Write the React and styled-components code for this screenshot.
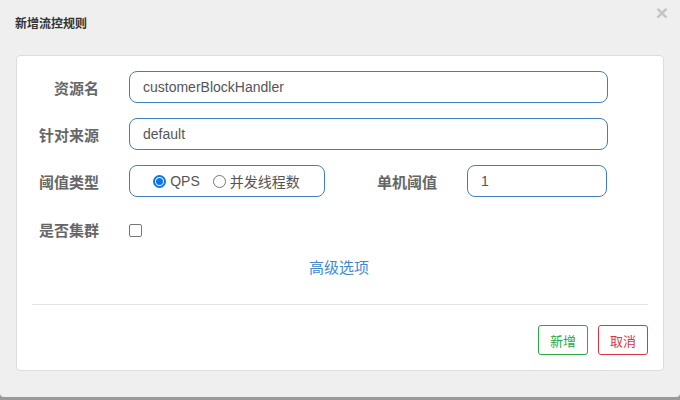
import React from "react";
import styled, { createGlobalStyle } from "styled-components";

const Global = createGlobalStyle`
  html, body { margin: 0; padding: 0; background: #9a9a9a; }
  body { font-family: "Liberation Sans", "Noto Sans CJK SC", Arial, sans-serif; }
  * { box-sizing: border-box; }
`;

const Modal = styled.div`
  position: relative;
  width: 680px;
  height: 397px;
  background: #efefef;
  border-radius: 0 0 4px 4px;
  padding: 0 16px;
  display: flex;
  flex-direction: column;
`;

const Header = styled.div`
  height: 55px;
  display: flex;
  align-items: flex-start;
  padding-top: 15px;
`;

const Title = styled.h4`
  margin: 0;
  margin-left: -1px;
  font-size: 12px;
  line-height: 16px;
  font-weight: bold;
  color: #333;
  font-family: "Noto Sans CJK SC", sans-serif;
`;

const Close = styled.span`
  position: absolute;
  top: 2px;
  right: 12px;
  font-size: 21px;
  line-height: 22px;
  font-weight: bold;
  color: #c4c4c4;
  font-family: "Liberation Sans", Arial, sans-serif;
`;

const Panel = styled.div`
  background: #fff;
  border: 1px solid #dcdcdc;
  border-radius: 4px;
  padding: 15px 15px 15px;
  height: 316px;
  display: flex;
  flex-direction: column;
`;

const Row = styled.div`
  display: flex;
  align-items: center;
  height: ${(p) => p.$h || 32}px;
  margin-bottom: 15px;
`;

const Label = styled.label`
  width: ${(p) => p.$w || 67}px;
  text-align: right;
  font-size: 15px;
  font-weight: bold;
  color: #666;
  font-family: "Noto Sans CJK SC", sans-serif;
  margin-right: 30px;
  flex: none;
`;

const Input = styled.div`
  width: ${(p) => p.$w}px;
  height: 32px;
  border: 1px solid #3f7fbf;
  border-radius: 8px;
  padding: 0 13px;
  display: flex;
  align-items: center;
  font-size: 14px;
  color: #555;
  flex: none;
`;

const RadioBox = styled.div`
  width: 196px;
  height: 32px;
  border: 1px solid #3f7fbf;
  border-radius: 8px;
  display: flex;
  align-items: center;
  justify-content: center;
  gap: 13px;
  padding-right: 1px;
  font-size: 14px;
  color: #555;
  margin-right: 51px;
  flex: none;
`;

const RadioItem = styled.span`
  display: flex;
  align-items: center;
  gap: 4px;
  font-family: "Liberation Sans", "Noto Sans CJK SC", sans-serif;
`;

const Circle = styled.span`
  width: 13px;
  height: 13px;
  border-radius: 50%;
  border: ${(p) => (p.$on ? "2px solid #0a75e8" : "1px solid #767676")};
  background: #fff;
  display: flex;
  align-items: center;
  justify-content: center;
  &::after {
    content: "";
    display: ${(p) => (p.$on ? "block" : "none")};
    width: 7px;
    height: 7px;
    border-radius: 50%;
    background: #0a75e8;
  }
`;

const Checkbox = styled.span`
  width: 13px;
  height: 13px;
  border: 1px solid #767676;
  border-radius: 2px;
  margin-top: 2px;
`;

const Link = styled.div`
  text-align: center;
  font-size: 15px;
  line-height: 20px;
  color: #3d8ad0;
  font-family: "Noto Sans CJK SC", sans-serif;
  margin-top: -4px;
  margin-left: -2px;
`;

const Divider = styled.hr`
  border: 0;
  border-top: 1px solid #e3e3e3;
  margin: 27px 0 0;
`;

const Footer = styled.div`
  display: flex;
  justify-content: flex-end;
  gap: 10px;
  margin-top: 20px;
`;

const Button = styled.button`
  width: 50px;
  height: 30px;
  background: #fff;
  border: 1px solid ${(p) => p.$c};
  color: ${(p) => p.$c};
  border-radius: 3px;
  font-size: 13px;
  font-family: "Noto Sans CJK SC", sans-serif;
  padding: 0;
`;

export default function App() {
  return (
    <>
      <Global />
      <Modal>
        <Header>
          <Title>新增流控规则</Title>
        </Header>
        <Close>×</Close>
        <Panel>
          <Row>
            <Label>资源名</Label>
            <Input $w={479}>customerBlockHandler</Input>
          </Row>
          <Row>
            <Label>针对来源</Label>
            <Input $w={479}>default</Input>
          </Row>
          <Row>
            <Label>阈值类型</Label>
            <RadioBox>
              <RadioItem>
                <Circle $on />
                QPS
              </RadioItem>
              <RadioItem>
                <Circle />
                并发线程数
              </RadioItem>
            </RadioBox>
            <Label $w={61}>单机阈值</Label>
            <Input $w={140}>1</Input>
          </Row>
          <Row $h={36}>
            <Label>是否集群</Label>
            <Checkbox />
          </Row>
          <Link>高级选项</Link>
          <Divider />
          <Footer>
            <Button $c="#28a745">新增</Button>
            <Button $c="#dc3545">取消</Button>
          </Footer>
        </Panel>
      </Modal>
    </>
  );
}
